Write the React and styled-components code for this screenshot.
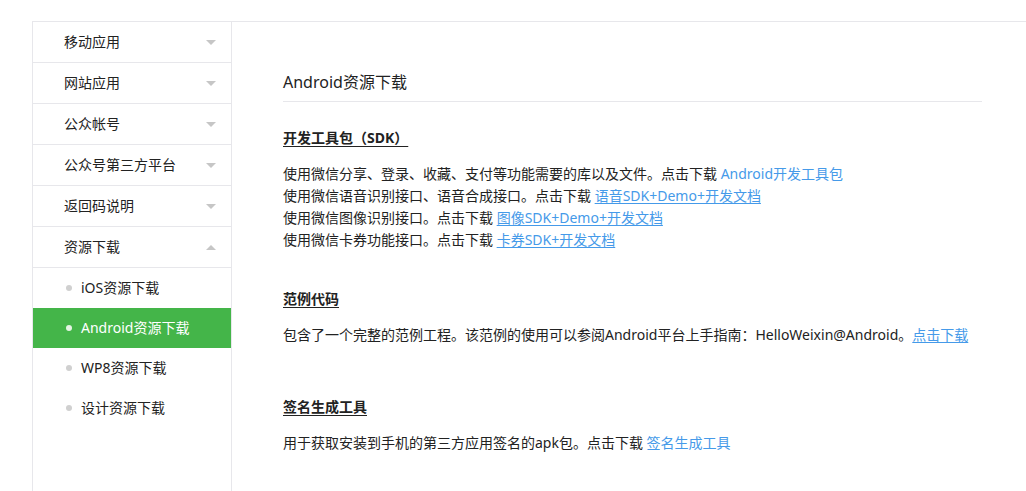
import React from "react";
import styled, { createGlobalStyle } from "styled-components";

const GlobalStyle = createGlobalStyle`
  html, body {
    margin: 0;
    padding: 0;
    background: #fff;
  }
  body {
    font-family: "Noto Sans", "Noto Sans CJK SC", sans-serif;
    font-size: 14px;
    color: #222;
  }
`;

const Page = styled.div`
  padding-top: 21px;
  padding-left: 32px;
  height: 491px;
  box-sizing: border-box;
  overflow: hidden;
`;

const Frame = styled.div`
  display: flex;
  border-top: 1px solid #e7e7eb;
  border-left: 1px solid #e7e7eb;
  min-height: 600px;
`;

const Sidebar = styled.nav`
  width: 198px;
  flex-shrink: 0;
  border-right: 1px solid #e7e7eb;
`;

const MenuItem = styled.div`
  display: flex;
  align-items: center;
  justify-content: space-between;
  height: 40px;
  padding: 0 15px 0 31px;
  border-bottom: 1px solid #e7e7eb;
  color: #222;
  line-height: 38px;
`;

const Arrow = styled.span`
  width: 0;
  height: 0;
  border-left: 5px solid transparent;
  border-right: 5px solid transparent;
  ${(p) =>
    p.$up
      ? "border-bottom: 5px solid #c6c6c6;"
      : "border-top: 5px solid #c6c6c6;"}
`;

const SubList = styled.div`
  display: flex;
  flex-direction: column;
`;

const SubItem = styled.div`
  display: flex;
  align-items: center;
  height: 40px;
  padding-left: 33px;
  gap: 9px;
  line-height: 38px;
  background: ${(p) => (p.$active ? "#44b549" : "transparent")};
  color: ${(p) => (p.$active ? "#fff" : "#222")};
`;

const Dot = styled.span`
  width: 6px;
  height: 6px;
  border-radius: 50%;
  background: ${(p) => (p.$active ? "#e4f4e4" : "#d0d0d0")};
`;

const Main = styled.main`
  flex: 1;
  padding: 48px 44px 0 51px;
`;

const Title = styled.h2`
  margin: 0;
  font-size: 16px;
  font-weight: normal;
  line-height: 24px;
  padding-bottom: 7px;
  border-bottom: 1px solid #e7e7eb;
  color: #222;
`;

const Section = styled.section`
  margin-top: ${(p) => p.$top}px;
`;

const SectionTitle = styled.h3`
  margin: 0 0 14px;
  font-size: 14px;
  font-weight: bold;
  line-height: 22px;
  text-decoration: underline;
  text-underline-offset: 3px;
  color: #222;
`;

const Para = styled.p`
  margin: 0;
  line-height: 22px;
  color: #222;
`;

const Link = styled.a`
  color: #459ae9;
  text-decoration: ${(p) => (p.$under ? "underline" : "none")};
  text-underline-offset: 2px;
`;

const menu = [
  { label: "移动应用" },
  { label: "网站应用" },
  { label: "公众帐号" },
  { label: "公众号第三方平台" },
  { label: "返回码说明" },
  { label: "资源下载", open: true },
];

const subs = ["iOS资源下载", "Android资源下载", "WP8资源下载", "设计资源下载"];

export default function App() {
  return (
    <Page>
      <GlobalStyle />
      <Frame>
        <Sidebar>
          {menu.map((m) => (
            <MenuItem key={m.label}>
              <span>{m.label}</span>
              <Arrow $up={m.open} />
            </MenuItem>
          ))}
          <SubList>
            {subs.map((s, i) => (
              <SubItem key={s} $active={i === 1}>
                <Dot $active={i === 1} />
                <span>{s}</span>
              </SubItem>
            ))}
          </SubList>
        </Sidebar>
        <Main>
          <Title>Android资源下载</Title>
          <Section $top={25}>
            <SectionTitle>开发工具包（SDK）</SectionTitle>
            <Para>
              使用微信分享、登录、收藏、支付等功能需要的库以及文件。点击下载{" "}
              <Link href="#">Android开发工具包</Link>
            </Para>
            <Para>
              使用微信语音识别接口、语音合成接口。点击下载{" "}
              <Link href="#" $under>
                语音SDK+Demo+开发文档
              </Link>
            </Para>
            <Para>
              使用微信图像识别接口。点击下载{" "}
              <Link href="#" $under>
                图像SDK+Demo+开发文档
              </Link>
            </Para>
            <Para>
              使用微信卡券功能接口。点击下载{" "}
              <Link href="#" $under>
                卡券SDK+开发文档
              </Link>
            </Para>
          </Section>
          <Section $top={37}>
            <SectionTitle>范例代码</SectionTitle>
            <Para>
              包含了一个完整的范例工程。该范例的使用可以参阅Android平台上手指南：HelloWeixin@Android。
              <Link href="#" $under>
                点击下载
              </Link>
            </Para>
          </Section>
          <Section $top={50}>
            <SectionTitle>签名生成工具</SectionTitle>
            <Para>
              用于获取安装到手机的第三方应用签名的apk包。点击下载{" "}
              <Link href="#">签名生成工具</Link>
            </Para>
          </Section>
        </Main>
      </Frame>
    </Page>
  );
}
